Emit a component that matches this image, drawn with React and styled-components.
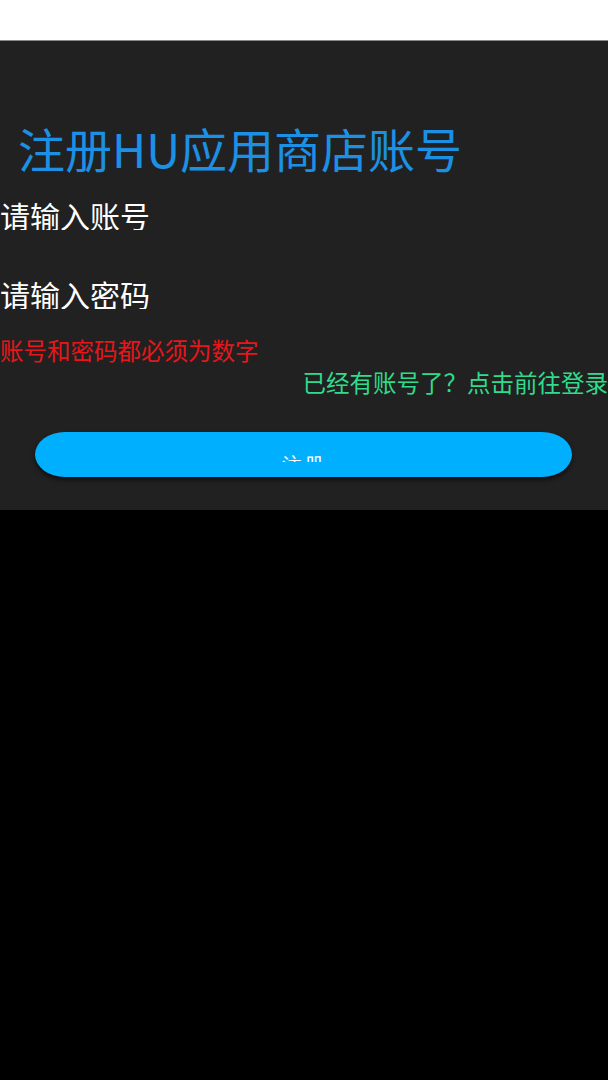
import React from 'react';
import styled, { createGlobalStyle } from 'styled-components';

const GlobalStyle = createGlobalStyle`
  body {
    margin: 0;
    background: #000;
    font-family: "Noto Sans CJK SC", "Noto Sans", sans-serif;
  }
`;

const Screen = styled.div`
  width: 608px;
  min-height: 1080px;
  background: #000;
`;

const TopBar = styled.div`
  height: 40px;
  background: #fff;
  border-bottom: 1px solid #8a8a8a;
`;

const Panel = styled.div`
  background: #212121;
  display: flex;
  flex-direction: column;
  padding: 83px 0 33px;
`;

const Title = styled.h1`
  margin: 0 0 0 18px;
  font-size: 47px;
  line-height: 47px;
  font-weight: 400;
  color: #1c90e4;
  white-space: nowrap;
`;

const Field = styled.input`
  display: block;
  margin: ${(p) => p.$top}px 0 0 0;
  padding: 0;
  width: 100%;
  height: 30px;
  border: none;
  outline: none;
  background: transparent;
  font-family: inherit;
  font-size: 30px;
  line-height: 30px;
  color: #fff;

  &::placeholder {
    color: #fff;
    opacity: 1;
  }
`;

const Note = styled.div`
  margin-top: ${(p) => p.$top}px;
  font-size: 23.5px;
  line-height: 24px;
  color: ${(p) => p.$color};
  text-align: ${(p) => p.$align || 'left'};
  white-space: nowrap;
  cursor: ${(p) => (p.$link ? 'pointer' : 'default')};
`;

const SubmitButton = styled.button`
  margin: 38px 36px 0 35px;
  height: 45px;
  border: none;
  border-radius: 30px / 50%;
  background: #00b0ff;
  box-shadow: 0 3px 4px rgba(0, 0, 0, 0.55);
  display: flex;
  justify-content: center;
  align-items: flex-start;
  padding: 23px 0 0;
  cursor: pointer;
`;

const ButtonLabel = styled.span`
  display: block;
  height: 7px;
  overflow: hidden;
  font-family: inherit;
  font-size: 20px;
  line-height: 20px;
  letter-spacing: 2px;
  color: #fff;
`;

export default function App() {
  return (
    <Screen>
      <GlobalStyle />
      <TopBar />
      <Panel>
        <Title>注册HU应用商店账号</Title>
        <Field $top={29} placeholder="请输入账号" />
        <Field $top={49} type="password" placeholder="请输入密码" />
        <Note $top={29} $color="#e8161a">账号和密码都必须为数字</Note>
        <Note $top={8} $color="#2edc8c" $align="right" $link>
          已经有账号了？点击前往登录
        </Note>
        <SubmitButton>
          <ButtonLabel>注册</ButtonLabel>
        </SubmitButton>
      </Panel>
    </Screen>
  );
}
